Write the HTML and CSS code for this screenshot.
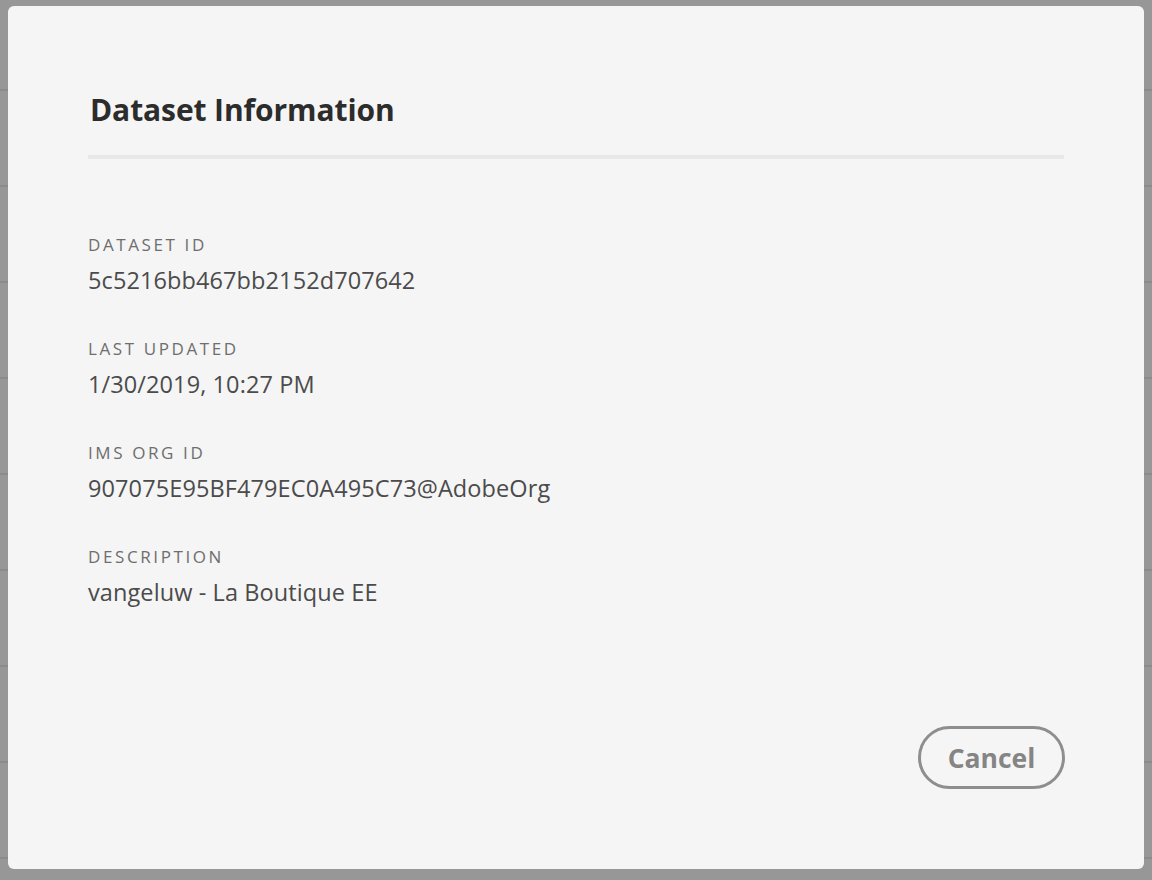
FILE: index.html
```html
<!DOCTYPE html>
<html lang="en">
<head>
<meta charset="utf-8">
<title>Dataset Information</title>
<link rel="stylesheet" href="styles.css">
</head>
<body>
<div class="backdrop">
  <section class="dialog" role="dialog" aria-labelledby="dlg-title">
    <header class="dialog-header">
      <h1 id="dlg-title" class="dialog-title">Dataset Information</h1>
    </header>
    <div class="dialog-body">
      <div class="field">
        <div class="field-label">Dataset ID</div>
        <div class="field-value">5c5216bb467bb2152d707642</div>
      </div>
      <div class="field">
        <div class="field-label">Last Updated</div>
        <div class="field-value">1/30/2019, 10:27 PM</div>
      </div>
      <div class="field">
        <div class="field-label">IMS Org ID</div>
        <div class="field-value">907075E95BF479EC0A495C73@AdobeOrg</div>
      </div>
      <div class="field">
        <div class="field-label">Description</div>
        <div class="field-value">vangeluw - La Boutique EE</div>
      </div>
    </div>
    <footer class="dialog-footer">
      <button class="btn-cancel" type="button">Cancel</button>
    </footer>
  </section>
</div>
</body>
</html>
```

FILE: styles.css
```css
html, body {
  margin: 0;
  padding: 0;
}

body {
  width: 1152px;
  height: 880px;
  overflow: hidden;
  font-family: "Open Sans", "Noto Sans", sans-serif;
  background-color: #979797;
  background-image: repeating-linear-gradient(
    to bottom,
    transparent 0px,
    transparent 89px,
    #8b8b8b 89px,
    #8b8b8b 91px,
    transparent 91px,
    transparent 96px
  );
  background-position: 0 0;
}

.backdrop {
  padding: 6px 8px 0 8px;
}

.dialog {
  box-sizing: border-box;
  width: 1136px;
  height: 863px;
  background: #f5f5f5;
  border-radius: 6px;
  padding: 0 80px 80px 80px;
  display: flex;
  flex-direction: column;
}

.dialog-header {
  padding-top: 86px;
  padding-bottom: 27px;
  border-bottom: 4px solid #e8e8e8;
}

.dialog-title {
  margin: 0;
  font-size: 30px;
  line-height: 36px;
  font-weight: 700;
  color: #2c2c2c;
  padding-left: 2px;
  letter-spacing: -0.1px;
}

.dialog-body {
  margin-top: 76px;
  display: flex;
  flex-direction: column;
  gap: 44px;
}

.field {
  display: flex;
  flex-direction: column;
  gap: 10px;
}

.field-label {
  font-size: 17px;
  line-height: 20px;
  text-transform: uppercase;
  letter-spacing: 2.6px;
  color: #6e6e6e;
}

.field-value {
  font-size: 23.5px;
  line-height: 30px;
  color: #4b4b4b;
  letter-spacing: 0.1px;
}

.dialog-footer {
  margin-top: auto;
  display: flex;
  justify-content: flex-end;
}

.btn-cancel {
  box-sizing: border-box;
  width: 147px;
  height: 63px;
  border: 3px solid #8e8e8e;
  border-radius: 32px;
  background: transparent;
  font-family: inherit;
  font-size: 26.5px;
  font-weight: 700;
  color: #858585;
  padding: 0;
  margin-right: -1px;
}
```
